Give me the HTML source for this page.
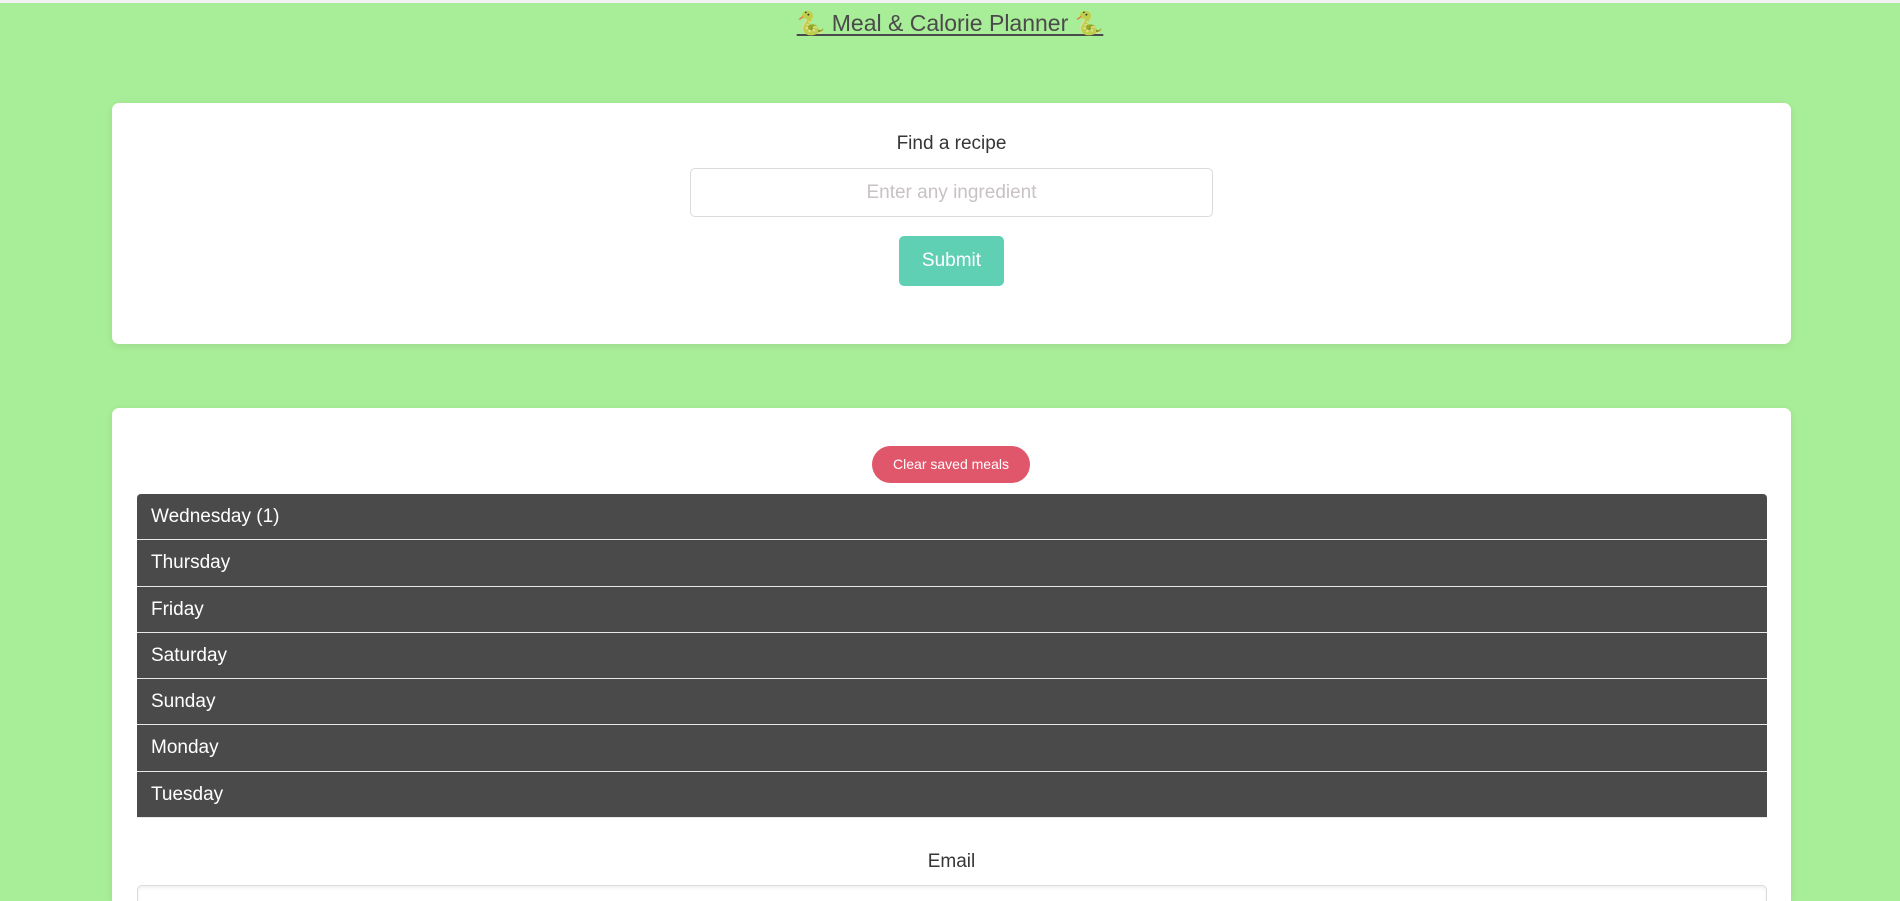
<!DOCTYPE html>
<html><head><meta charset="utf-8"><style>
*{box-sizing:border-box;margin:0;padding:0}
html{width:1900px;height:901px;overflow:hidden}
body{width:1900px;height:901px;overflow:hidden;background:#a8ed98;font-family:"Liberation Sans","DejaVu Sans",sans-serif;position:relative}
.top{position:absolute;left:0;top:0;width:1900px;height:3px;background:#f2f2f2}
h1{position:absolute;left:0;width:1900px;top:10px;text-align:center;font-weight:normal;font-size:23px;color:#4a4a4a}
h1 span{text-decoration:underline;text-underline-offset:3px}
.card{position:absolute;left:112px;width:1679px;background:#fff;border-radius:7px;box-shadow:0 2px 8px rgba(0,0,0,.08)}
.lbl{position:absolute;left:0;width:100%;text-align:center;font-size:19px;color:#363636}
.inp{position:absolute;border:1px solid #dbdbdb;border-radius:5px;background:#fff;text-align:center;font-size:19px;color:#c8c2c2;line-height:47px}
.sub{position:absolute;left:787px;top:133px;width:105px;height:50px;background:#60d0b4;border-radius:5px;color:#fff;font-size:19px;text-align:center;line-height:50px}
.clr{position:absolute;left:760px;top:38px;width:158px;height:37px;border-radius:19px;background:#e0566b;color:#fff;font-size:14px;text-align:center;line-height:37px}
.rows{position:absolute;left:25px;top:86px;width:1630px;border-radius:4px 4px 0 0;overflow:hidden}
.row{height:46.3px;background:#4a4a4a;color:#fff;font-size:19px;padding-left:14px;line-height:46px;border-bottom:1.5px solid #e8e8e8}
</style></head><body>
<div class="top"></div>
<h1><span>🐍 Meal &amp; Calorie Planner 🐍</span></h1>
<div class="card" style="top:103px;height:241px">
<div class="lbl" style="top:30px">Find a recipe</div>
<div class="inp" style="left:578px;top:65px;width:523px;height:49px">Enter any ingredient</div>
<div class="sub">Submit</div>
</div>
<div class="card" style="top:408px;height:493px;border-radius:7px 7px 0 0">
<div class="clr">Clear saved meals</div>
<div class="rows">
<div class="row">Wednesday (1)</div>
<div class="row">Thursday</div>
<div class="row">Friday</div>
<div class="row">Saturday</div>
<div class="row">Sunday</div>
<div class="row">Monday</div>
<div class="row">Tuesday</div>
</div>
<div class="lbl" style="top:443px">Email</div>
<div class="inp" style="left:25px;top:477px;width:1630px;height:49px;box-shadow:inset 0 2px 3px rgba(0,0,0,.06)"></div>
</div>
</body></html>
